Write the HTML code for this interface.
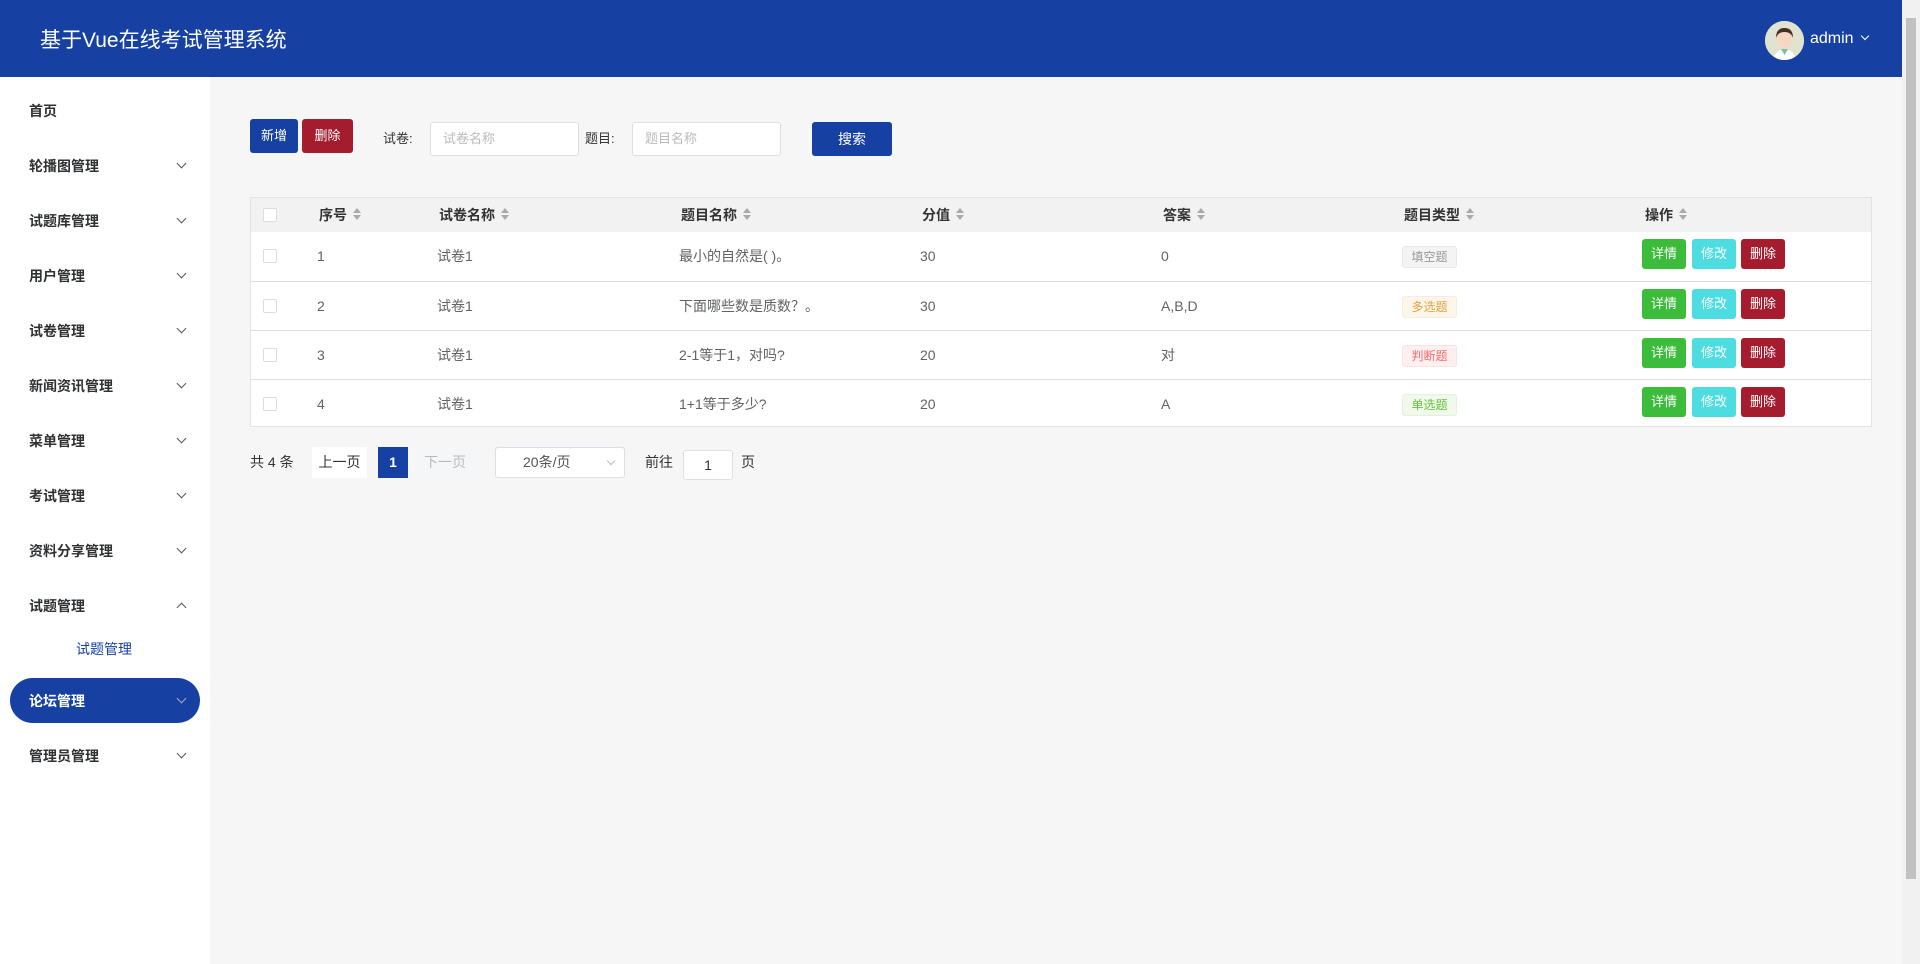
<!DOCTYPE html>
<html><head><meta charset="utf-8"><style>
*{margin:0;padding:0;box-sizing:border-box}
body{width:1920px;height:964px;overflow:hidden;background:#f6f6f6;font-family:"Liberation Sans","Noto Sans CJK SC",sans-serif;font-size:14px;color:#606266;position:relative}
.hd{position:absolute;left:0;top:0;width:1902px;height:77px;background:#1641a3}
.hd .t{position:absolute;left:40px;top:24px;color:#fff;font-size:21px}
.av{position:absolute;left:1765px;top:21px;width:39px;height:39px;border-radius:50%;background:#dfe3cf;overflow:hidden}
.adm{position:absolute;left:1810px;top:30px;color:#fff;font-size:16px}
.sb{position:absolute;left:0;top:77px;width:210px;height:887px;background:#fff}
.it{position:absolute;left:29px;font-size:14px;font-weight:bold;color:#303133}
.ch{position:absolute;left:178px;width:7px;height:7px;border-right:1px solid #555;border-bottom:1px solid #555;transform:rotate(45deg)}
.pill{position:absolute;left:10px;top:678px;width:190px;height:45px;border-radius:23px;background:#1641a3}
.btn{position:absolute;color:#fff;font-size:13px;text-align:center;border-radius:3px}
.inp{position:absolute;background:#fff;border:1px solid #dcdfe6;border-radius:3px;height:34px;color:#bbb;font-size:13px;padding:0 12px;line-height:32px}
.lab{position:absolute;font-size:13px;color:#333;line-height:34px}
.tbl{position:absolute;left:250px;top:197px;width:1622px;height:230px;background:#fff;border:1px solid #e4e4e4}
.th{position:absolute;left:0;top:0;width:100%;height:34px;background:#f2f2f2}
.row{position:absolute;left:0;width:100%;height:49px;border-top:1px solid #ddd}
.c{position:absolute;font-size:14px;top:0;line-height:48px}
.hc{position:absolute;top:0;line-height:34px;font-size:14px;font-weight:bold;color:#333}
.srt{display:inline-block;margin-left:6px;vertical-align:middle;position:relative;top:-2px}
.srt:before{content:"";display:block;border:4px solid transparent;border-bottom:5px solid #aaa;border-top:0;margin-bottom:2px}
.srt:after{content:"";display:block;border:4px solid transparent;border-top:5px solid #aaa;border-bottom:0}
.cb{position:absolute;left:12px;width:14px;height:14px;border:1px solid #ddd;background:#fff;border-radius:2px}
.tag{position:absolute;left:1151px;width:55px;height:22px;border-radius:3px;font-size:12px;text-align:center;line-height:20px;border:1px solid}
.ab{position:absolute;top:7px;height:30px;width:44px;border-radius:3px;color:#fff;font-size:13px;text-align:center;line-height:30px}
.pg{position:absolute;font-size:14px;color:#333;line-height:31px;top:447px}
</style></head><body>
<div class="hd"><div class="t">基于Vue在线考试管理系统</div>
<div class="av"><svg width="39" height="39" viewBox="0 0 39 39"><rect width="39" height="39" fill="#dfe3cf"/><path d="M8 39 Q10 29 19.5 28 Q29 29 31 39Z" fill="#fff"/><path d="M16 28 L19.5 34 L23 28Z" fill="#7cc0a0"/><ellipse cx="19.5" cy="18" rx="8" ry="9" fill="#f6d7c3"/><path d="M11 17 Q11 7 19.5 7 Q28 7 28 17 Q26 11 19.5 11 Q13 11 11 17Z" fill="#4a2e25"/></svg></div>
<div class="adm">admin <span style="display:inline-block;width:6px;height:6px;border-right:1px solid #fff;border-bottom:1px solid #fff;transform:rotate(45deg);margin-left:4px;position:relative;top:-4px"></span></div>
</div>
<div class="sb">
<div class="it" style="top:24px">首页</div>
<div class="it" style="top:79px">轮播图管理</div><div class="ch" style="top:83px"></div>
<div class="it" style="top:134px">试题库管理</div><div class="ch" style="top:138px"></div>
<div class="it" style="top:189px">用户管理</div><div class="ch" style="top:193px"></div>
<div class="it" style="top:244px">试卷管理</div><div class="ch" style="top:248px"></div>
<div class="it" style="top:299px">新闻资讯管理</div><div class="ch" style="top:303px"></div>
<div class="it" style="top:354px">菜单管理</div><div class="ch" style="top:358px"></div>
<div class="it" style="top:409px">考试管理</div><div class="ch" style="top:413px"></div>
<div class="it" style="top:464px">资料分享管理</div><div class="ch" style="top:468px"></div>
<div class="it" style="top:519px">试题管理</div><div class="ch" style="top:527px;transform:rotate(225deg)"></div>
<div style="position:absolute;left:76px;top:562px;font-size:14px;color:#1641a3">试题管理</div>
</div>
<div class="pill"></div>
<div class="it" style="top:691px;color:#fff">论坛管理</div><div class="ch" style="top:695px;border-color:#aab;"></div>
<div class="it" style="top:746px">管理员管理</div><div class="ch" style="top:750px"></div>

<div class="btn" style="left:250px;top:119px;width:48px;height:34px;line-height:34px;background:#1641a3">新增</div>
<div class="btn" style="left:302px;top:119px;width:51px;height:34px;line-height:34px;background:#a51c2f">删除</div>
<div class="lab" style="left:383px;top:122px">试卷:</div>
<div class="inp" style="left:430px;top:122px;width:149px">试卷名称</div>
<div class="lab" style="left:585px;top:122px">题目:</div>
<div class="inp" style="left:632px;top:122px;width:149px">题目名称</div>
<div class="btn" style="left:812px;top:122px;width:80px;height:34px;line-height:34px;background:#1641a3;font-size:14px">搜索</div>

<div class="tbl">
<div class="th"><div class="cb" style="top:10px"></div>
<div class="hc" style="left:68px">序号<span class="srt"></span></div>
<div class="hc" style="left:188px">试卷名称<span class="srt"></span></div>
<div class="hc" style="left:430px">题目名称<span class="srt"></span></div>
<div class="hc" style="left:671px">分值<span class="srt"></span></div>
<div class="hc" style="left:912px">答案<span class="srt"></span></div>
<div class="hc" style="left:1153px">题目类型<span class="srt"></span></div>
<div class="hc" style="left:1394px">操作<span class="srt"></span></div>
</div>
<div class="row" style="top:34px;border-top:0">
<div class="cb" style="top:17px"></div><div class="c" style="left:66px">1</div><div class="c" style="left:186px">试卷1</div><div class="c" style="left:428px">最小的自然是( )。</div><div class="c" style="left:669px">30</div><div class="c" style="left:910px">0</div>
<div class="tag" style="top:14px;color:#999;background:#f4f4f5;border-color:#e9e9eb">填空题</div>
<div class="ab" style="left:1391px;background:#3bbd3b">详情</div><div class="ab" style="left:1441px;background:#4ddde0">修改</div><div class="ab" style="left:1490px;background:#a51c2f">删除</div></div>
<div class="row" style="top:83px">
<div class="cb" style="top:17px"></div><div class="c" style="left:66px">2</div><div class="c" style="left:186px">试卷1</div><div class="c" style="left:428px">下面哪些数是质数？。</div><div class="c" style="left:669px">30</div><div class="c" style="left:910px">A,B,D</div>
<div class="tag" style="top:14px;color:#e6a23c;background:#fdf6ec;border-color:#faecd8">多选题</div>
<div class="ab" style="left:1391px;background:#3bbd3b">详情</div><div class="ab" style="left:1441px;background:#4ddde0">修改</div><div class="ab" style="left:1490px;background:#a51c2f">删除</div></div>
<div class="row" style="top:132px">
<div class="cb" style="top:17px"></div><div class="c" style="left:66px">3</div><div class="c" style="left:186px">试卷1</div><div class="c" style="left:428px">2-1等于1，对吗?</div><div class="c" style="left:669px">20</div><div class="c" style="left:910px">对</div>
<div class="tag" style="top:14px;color:#f56c6c;background:#fef0f0;border-color:#fde2e2">判断题</div>
<div class="ab" style="left:1391px;background:#3bbd3b">详情</div><div class="ab" style="left:1441px;background:#4ddde0">修改</div><div class="ab" style="left:1490px;background:#a51c2f">删除</div></div>
<div class="row" style="top:181px">
<div class="cb" style="top:17px"></div><div class="c" style="left:66px">4</div><div class="c" style="left:186px">试卷1</div><div class="c" style="left:428px">1+1等于多少?</div><div class="c" style="left:669px">20</div><div class="c" style="left:910px">A</div>
<div class="tag" style="top:14px;color:#67c23a;background:#f0f9eb;border-color:#e1f3d8">单选题</div>
<div class="ab" style="left:1391px;background:#3bbd3b">详情</div><div class="ab" style="left:1441px;background:#4ddde0">修改</div><div class="ab" style="left:1490px;background:#a51c2f">删除</div></div>
</div>

<div class="pg" style="left:250px">共 4 条</div>
<div class="pg" style="left:312px;width:55px;height:31px;background:#fff;text-align:center">上一页</div>
<div class="pg" style="left:378px;width:30px;height:31px;background:#1641a3;color:#fff;font-weight:bold;text-align:center">1</div>
<div class="pg" style="left:416px;width:58px;height:31px;background:#f4f6f8;color:#bbb;text-align:center">下一页</div>
<div class="pg" style="left:495px;width:130px;height:31px;background:#fff;border:1px solid #dcdfe6;border-radius:3px;line-height:29px;padding-left:27px;color:#555">20条/页<span style="position:absolute;right:10px;top:10px;width:6px;height:6px;border-right:1px solid #bbb;border-bottom:1px solid #bbb;transform:rotate(45deg)"></span></div>
<div class="pg" style="left:645px">前往</div>
<div class="pg" style="left:683px;top:450px;width:50px;height:30px;background:#fff;border:1px solid #dcdfe6;border-radius:3px;text-align:center;line-height:28px">1</div>
<div class="pg" style="left:741px">页</div>

<div style="position:absolute;left:1902px;top:0;width:18px;height:964px;background:#f1f1f1"></div>
<div style="position:absolute;left:1906px;top:18px;width:10px;height:861px;background:#c1c1c1"></div>
</body></html>
